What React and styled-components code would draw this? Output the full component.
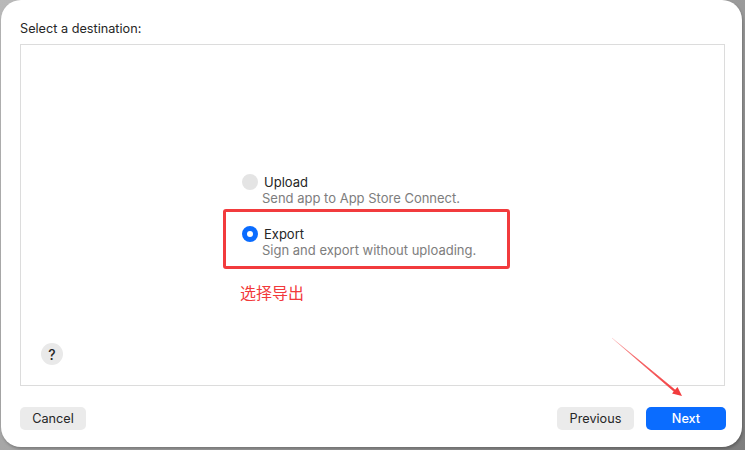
import React from "react";
import styled, { createGlobalStyle } from "styled-components";

const Global = createGlobalStyle`
  html, body { margin: 0; padding: 0; }
  body {
    width: 745px;
    height: 450px;
    overflow: hidden;
    background: linear-gradient(135deg, #b9b9b9 0%, #9c9c9c 60%, #7e7e7e 100%);
    font-family: Inter, "Noto Sans", "Liberation Sans", sans-serif;
  }
`;

const Stage = styled.div`
  position: relative;
  width: 745px;
  height: 450px;
`;

const Window = styled.div`
  box-sizing: border-box;
  width: 741px;
  height: 447px;
  margin-left: 1px;
  background: #ffffff;
  border-radius: 20px;
  box-shadow: 1px 2px 3px rgba(0, 0, 0, 0.25);
  padding: 21px 17px 17px 19px;
  display: flex;
  flex-direction: column;
`;

const Heading = styled.div`
  font-size: 12.7px;
  line-height: 16px;
  color: #262626;
  margin-bottom: 7px;
`;

const Panel = styled.div`
  flex: 1;
  border: 1px solid #dcdcdc;
  display: flex;
  flex-direction: column;
  padding: 0 20px 20px 20px;
`;

const Center = styled.div`
  flex: 1;
  display: flex;
  align-items: center;
  padding-left: 201px;
  padding-top: 43px;
`;

const Options = styled.div`
  display: flex;
  flex-direction: column;
  gap: 20px;
`;

const Option = styled.div`
  position: relative;
  display: flex;
  align-items: flex-start;
  gap: 6px;
`;

const Highlight = styled.div`
  position: absolute;
  left: -19px;
  top: -17px;
  width: 287px;
  height: 60px;
  box-sizing: border-box;
  border: 3px solid #f23b3d;
  border-radius: 3px;
  pointer-events: none;
`;

const Annotation = styled.div`
  position: absolute;
  left: -2px;
  top: 56px;
  font-family: "Noto Sans CJK SC", sans-serif;
  font-size: 16px;
  line-height: 20px;
  color: #f2393b;
  white-space: nowrap;
`;

const Radio = styled.span`
  width: 16px;
  height: 16px;
  border-radius: 50%;
  box-sizing: border-box;
  display: flex;
  align-items: center;
  justify-content: center;
  background: ${(p) => (p.$checked ? "#0a6cff" : "#e4e4e4")};
  flex-shrink: 0;
  &::after {
    content: "";
    display: ${(p) => (p.$checked ? "block" : "none")};
    width: 6px;
    height: 6px;
    border-radius: 50%;
    background: #fff;
  }
`;

const Texts = styled.div`
  display: flex;
  flex-direction: column;
`;

const Label = styled.div`
  font-size: 13px;
  line-height: 16px;
  color: #262626;
`;

const Sub = styled.div`
  font-size: 13px;
  line-height: 16px;
  color: #7d7d7d;
  margin-left: -2px;
  white-space: nowrap;
`;

const HelpRow = styled.div`
  display: flex;
`;

const Help = styled.div`
  width: 22px;
  height: 22px;
  border-radius: 50%;
  background: #e9e9e9;
  color: #262626;
  font-size: 14px;
  font-weight: 500;
  display: flex;
  align-items: center;
  justify-content: center;
`;

const Footer = styled.div`
  display: flex;
  align-items: center;
  margin-top: 21px;
  margin-right: -1px;
  gap: 12px;
`;

const Spacer = styled.div`
  flex: 1;
`;

const Button = styled.div`
  height: 23px;
  box-sizing: border-box;
  padding: 0 12px;
  min-width: ${(p) => p.$w || 0}px;
  border-radius: 5px;
  display: flex;
  align-items: center;
  justify-content: center;
  font-size: 12.7px;
  background: ${(p) => (p.$primary ? "#0a6cff" : "#ebebeb")};
  color: ${(p) => (p.$primary ? "#ffffff" : "#262626")};
  font-weight: ${(p) => (p.$primary ? 500 : 400)};
`;

const Arrow = styled.svg`
  position: absolute;
  left: 600px;
  top: 330px;
  pointer-events: none;
`;

export default function App() {
  return (
    <Stage>
      <Global />
      <Window>
        <Heading>Select a destination:</Heading>
        <Panel>
          <Center>
            <Options>
              <Option>
                <Radio />
                <Texts>
                  <Label>Upload</Label>
                  <Sub>Send app to App Store Connect.</Sub>
                </Texts>
              </Option>
              <Option>
                <Highlight />
                <Annotation>选择导出</Annotation>
                <Radio $checked />
                <Texts>
                  <Label>Export</Label>
                  <Sub>Sign and export without uploading.</Sub>
                </Texts>
              </Option>
            </Options>
          </Center>
          <HelpRow>
            <Help>?</Help>
          </HelpRow>
        </Panel>
        <Footer>
          <Button $w={66}>Cancel</Button>
          <Spacer />
          <Button $w={77}>Previous</Button>
          <Button $primary $w={80}>Next</Button>
        </Footer>
      </Window>
      <Arrow width="100" height="80" viewBox="0 0 100 80">
        <defs>
          <linearGradient id="ag" x1="12" y1="8" x2="80" y2="64" gradientUnits="userSpaceOnUse">
            <stop offset="0" stopColor="#f23b3d" stopOpacity="0.15" />
            <stop offset="0.4" stopColor="#f23b3d" stopOpacity="0.8" />
            <stop offset="1" stopColor="#f23b3d" />
          </linearGradient>
        </defs>
        <polygon points="12,8 77,61.5 75.8,63 12,8" fill="url(#ag)" stroke="url(#ag)" strokeWidth="0.6" />
        <polygon points="82,66 72,63.5 77.5,57" fill="#f23b3d" />
      </Arrow>
    </Stage>
  );
}
